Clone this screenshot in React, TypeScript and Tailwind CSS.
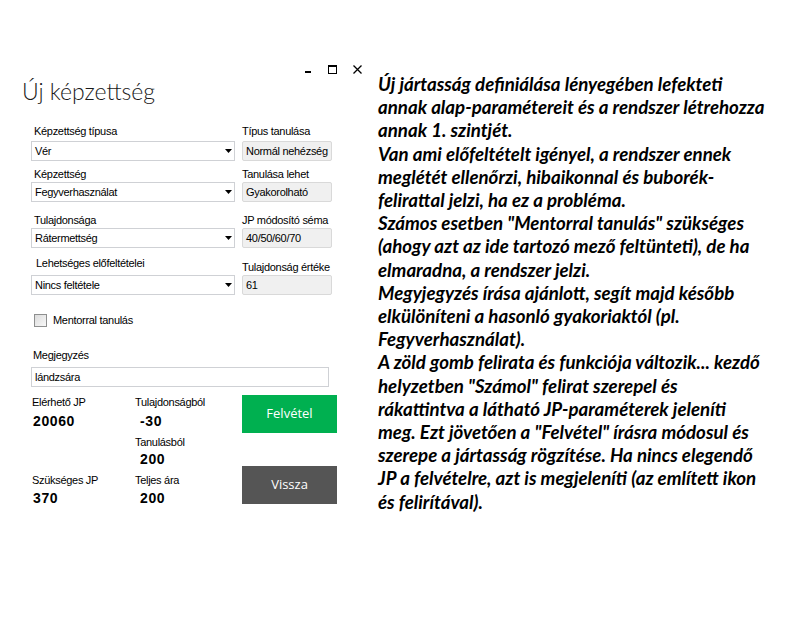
import { ReactNode } from "react";

const label = "font-['Liberation_Sans',Arial,sans-serif] text-[11px] leading-[14px] tracking-[-0.3px] text-black";
const value = "font-['Liberation_Sans',Arial,sans-serif] text-[14px] leading-[14px] font-bold tracking-[0.6px] text-black";

function Combo({ text }: { text: string }) {
  return (
    <div className="h-[20px] w-[204px] border border-[#cfd1d5] bg-white flex items-center justify-between pl-[3px] pr-[2px]">
      <span className={label}>{text}</span>
      <svg width="7" height="4" viewBox="0 0 7 4">
        <path d="M0 0h7L3.5 4z" fill="#000" />
      </svg>
    </div>
  );
}

function ReadOnly({ text }: { text: string }) {
  return (
    <div className="h-[20px] w-[90px] border border-[#d9d9d9] rounded-[2px] bg-[#f0f0f0] flex items-center pl-[3px] overflow-hidden whitespace-nowrap">
      <span className={label}>{text}</span>
    </div>
  );
}

function Field({ title, children, lt, mb }: { title: string; children: ReactNode; lt: string; mb: string }) {
  return (
    <div className={`flex flex-col ${lt}`}>
      <span className={`${label} ${mb}`}>{title}</span>
      {children}
    </div>
  );
}

const lines = [
  "Új jártasság definiálása lényegében lefekteti",
  "annak alap-paramétereit és a rendszer létrehozza",
  "annak 1. szintjét.",
  "Van ami előfeltételt igényel, a rendszer ennek",
  "meglétét ellenőrzi, hibaikonnal és buborék-",
  "felirattal jelzi, ha ez a probléma.",
  "Számos esetben \"Mentorral tanulás\" szükséges",
  "(ahogy azt az ide tartozó mező feltünteti), de ha",
  "elmaradna, a rendszer jelzi.",
  "Megyjegyzés írása ajánlott, segít majd később",
  "elkülöníteni a hasonló gyakoriaktól (pl.",
  "Fegyverhasználat).",
  "A zöld gomb felirata és funkciója változik... kezdő",
  "helyzetben \"Számol\" felirat szerepel és",
  "rákattintva a látható JP-paraméterek jeleníti",
  "meg. Ezt jövetően a \"Felvétel\" írásra módosul és",
  "szerepe a jártasság rögzítése. Ha nincs elegendő",
  "JP a felvételre, azt is megjeleníti (az említett ikon",
  "és felirítával).",
];

export default function App() {
  return (
    <div className="w-[790px] h-[630px] bg-white flex overflow-hidden">
      {/* FORM */}
      <div className="w-[378px] shrink-0 flex flex-col pt-[65px] pl-[22px]">
        <div className="h-[9px] flex items-start justify-end pr-[16px]">
          <div className="w-[6px] h-[2px] bg-black mt-[6px]" />
          <div className="w-[9px] h-[9px] border border-t-2 border-black ml-[17px]" />
          <svg width="9" height="9" viewBox="0 0 9 9" className="ml-[16px]">
            <path d="M0.5 0.5l8 8M8.5 0.5l-8 8" stroke="#000" strokeWidth="1.3" />
          </svg>
        </div>

        <h1 className="mt-[2px] font-['Lato',sans-serif] font-light text-[23px] leading-[30px] text-[#1a1a1a]">Új képzettség</h1>

        <div className="pl-[9px] flex flex-col">
          <div className="flex gap-[7px] mt-[18px]">
            <Field title="Képzettség típusa" lt="" mb="mb-[3px] pl-[3px]">
              <Combo text="Vér" />
            </Field>
            <Field title="Típus tanulása" lt="" mb="mb-[3px]">
              <ReadOnly text="Normál nehézség" />
            </Field>
          </div>
          <div className="flex gap-[7px] mt-[6px]">
            <Field title="Képzettség" lt="" mb="mb-[1px] pl-[3px]">
              <Combo text="Fegyverhasználat" />
            </Field>
            <Field title="Tanulása lehet" lt="" mb="mb-[1px]">
              <ReadOnly text="Gyakorolható" />
            </Field>
          </div>
          <div className="flex gap-[7px] mt-[11px]">
            <Field title="Tulajdonsága" lt="" mb="mb-[1px] pl-[3px]">
              <Combo text="Rátermettség" />
            </Field>
            <Field title="JP módosító séma" lt="" mb="mb-[1px]">
              <ReadOnly text="40/50/60/70" />
            </Field>
          </div>
          <div className="flex gap-[7px] items-start">
            <Field title="Lehetséges előfeltételei" lt="mt-[8px]" mb="mb-[5px] pl-[5px]">
              <Combo text="Nincs feltétele" />
            </Field>
            <Field title="Tulajdonság értéke" lt="mt-[12px]" mb="mb-[1px]">
              <ReadOnly text="61" />
            </Field>
          </div>

          <label className="flex items-center gap-[6px] mt-[18px] pl-[3px]">
            <span className="w-[13px] h-[13px] border border-[#8e8f8f] bg-gradient-to-br from-[#dcdcdc] to-[#f8f8f8]" />
            <span className={label}>Mentorral tanulás</span>
          </label>

          <span className={`${label} mt-[21px] pl-[2px] mb-[5px]`}>Megjegyzés</span>
          <div className="h-[20px] w-[298px] border border-[#cfd1d5] bg-white flex items-center pl-[3px]">
            <span className={label}>lándzsára</span>
          </div>

          <div className="flex mt-[8px]">
            <div className="w-[104px] flex flex-col pl-[1px]">
              <span className={label}>Elérhető JP</span>
              <span className={`${value} mt-[5px] pl-[1px]`}>20060</span>
              <span className={`${label} mt-[45px]`}>Szükséges JP</span>
              <span className={`${value} mt-[4px] pl-[1px]`}>370</span>
            </div>
            <div className="w-[107px] flex flex-col">
              <span className={label}>Tulajdonságból</span>
              <span className={`${value} mt-[5px] pl-[5px]`}>-30</span>
              <span className={`${label} mt-[7px]`}>Tanulásból</span>
              <span className={`${value} mt-[3px] pl-[5px]`}>200</span>
              <span className={`${label} mt-[7px]`}>Teljes ára</span>
              <span className={`${value} mt-[4px] pl-[5px]`}>200</span>
            </div>
            <div className="flex flex-col gap-[33px]">
              <button className="w-[95px] h-[38px] bg-[#00b050] text-white font-['Open_Sans',sans-serif] text-[13px]">Felvétel</button>
              <button className="w-[95px] h-[38px] bg-[#555555] text-white font-['Open_Sans',sans-serif] text-[13px]">Vissza</button>
            </div>
          </div>
        </div>
      </div>

      {/* NOTES */}
      <div className="flex flex-col pt-[73px] font-['Lato',sans-serif] italic font-bold text-[18.7px] leading-[23.2px] text-black whitespace-nowrap">
        {lines.map((l) => (
          <span key={l}>{l}</span>
        ))}
      </div>
    </div>
  );
}
